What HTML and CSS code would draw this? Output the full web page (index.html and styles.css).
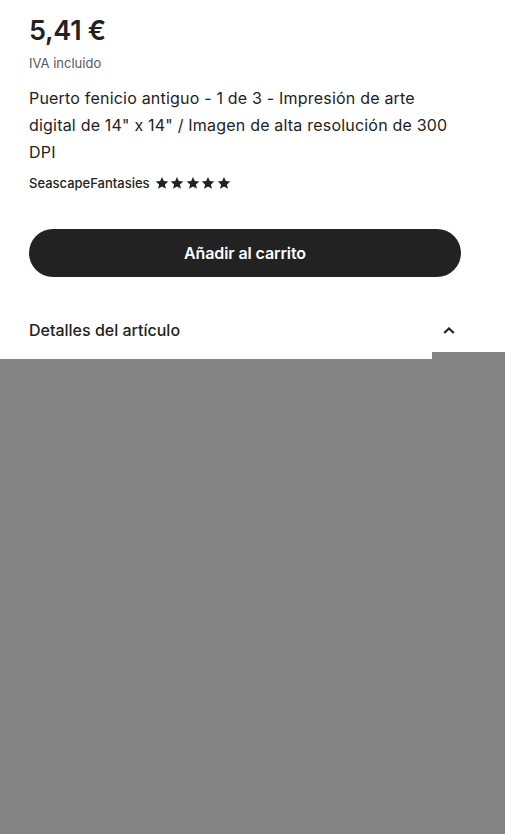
FILE: index.html
```html
<!DOCTYPE html>
<html lang="es">
<head>
<meta charset="utf-8">
<title>Puerto fenicio antiguo</title>
<link rel="stylesheet" href="styles.css">
</head>
<body>
<main class="panel">
  <div class="price">5,41 €</div>
  <div class="tax">IVA incluido</div>
  <h1 class="title">Puerto fenicio antiguo - 1 de 3 - Impresión de arte digital de 14" x 14" / Imagen de alta resolución de 300 DPI</h1>
  <div class="shop">
    <span class="shop-name">SeascapeFantasies</span>
    <span class="stars">
      <svg class="star" viewBox="0 0 24 24"><path d="M12 1.5l3.1 7.1 7.7.7-5.8 5.1 1.7 7.6L12 18l-6.7 4 1.7-7.6L1.2 9.3l7.7-.7z"/></svg>
      <svg class="star" viewBox="0 0 24 24"><path d="M12 1.5l3.1 7.1 7.7.7-5.8 5.1 1.7 7.6L12 18l-6.7 4 1.7-7.6L1.2 9.3l7.7-.7z"/></svg>
      <svg class="star" viewBox="0 0 24 24"><path d="M12 1.5l3.1 7.1 7.7.7-5.8 5.1 1.7 7.6L12 18l-6.7 4 1.7-7.6L1.2 9.3l7.7-.7z"/></svg>
      <svg class="star" viewBox="0 0 24 24"><path d="M12 1.5l3.1 7.1 7.7.7-5.8 5.1 1.7 7.6L12 18l-6.7 4 1.7-7.6L1.2 9.3l7.7-.7z"/></svg>
      <svg class="star" viewBox="0 0 24 24"><path d="M12 1.5l3.1 7.1 7.7.7-5.8 5.1 1.7 7.6L12 18l-6.7 4 1.7-7.6L1.2 9.3l7.7-.7z"/></svg>
    </span>
  </div>
  <button class="cart-btn" type="button">Añadir al carrito</button>
  <div class="details">
    <span class="details-label">Detalles del artículo</span>
    <svg class="chevron" viewBox="0 0 12 7"><path d="M1.2 6L6 1.5 10.8 6"/></svg>
  </div>
  <div class="notch"></div>
</main>
<div class="backdrop"></div>
</body>
</html>
```

FILE: styles.css
```css
html, body {
  margin: 0;
  padding: 0;
}
body {
  background: #838383;
  font-family: Inter, "Noto Sans", Arial, sans-serif;
  color: #222222;
  width: 505px;
  height: 834px;
  overflow: hidden;
}
.panel {
  position: relative;
  background: #ffffff;
  padding: 14px 44px 0 29px;
  height: 345px;
}
.price {
  font-size: 27px;
  font-weight: 600;
  line-height: 34px;
  letter-spacing: -0.3px;
}
.tax {
  font-size: 13px;
  line-height: 20px;
  color: #595959;
  margin-top: 5px;
}
.title {
  font-size: 16px;
  font-weight: 400;
  line-height: 27px;
  margin: 12px 0 0 0;
  letter-spacing: 0.2px;
}
.shop {
  display: flex;
  align-items: center;
  gap: 5px;
  margin-top: 7px;
  height: 20px;
}
.shop-name {
  font-size: 13px;
  font-weight: 500;
  letter-spacing: 0;
}
.stars {
  display: flex;
  gap: 1.6px;
}
.star {
  width: 14px;
  height: 14px;
  fill: #222222;
}
.cart-btn {
  display: block;
  width: 432px;
  height: 48px;
  margin-top: 36px;
  border: none;
  border-radius: 24px;
  background: #222222;
  color: #ffffff;
  font-family: inherit;
  font-size: 16px;
  font-weight: 600;
  letter-spacing: -0.1px;
}
.details {
  display: flex;
  align-items: center;
  justify-content: space-between;
  margin-top: 41px;
  padding-right: 6px;
}
.details-label {
  font-size: 16px;
  font-weight: 500;
  line-height: 24px;
}
.chevron {
  width: 12px;
  height: 7px;
  fill: none;
  stroke: #222222;
  stroke-width: 2.2;
}
.notch {
  position: absolute;
  right: 0;
  bottom: 0;
  width: 73px;
  height: 7px;
  background: #838383;
}
.backdrop {
  height: 475px;
}
```
